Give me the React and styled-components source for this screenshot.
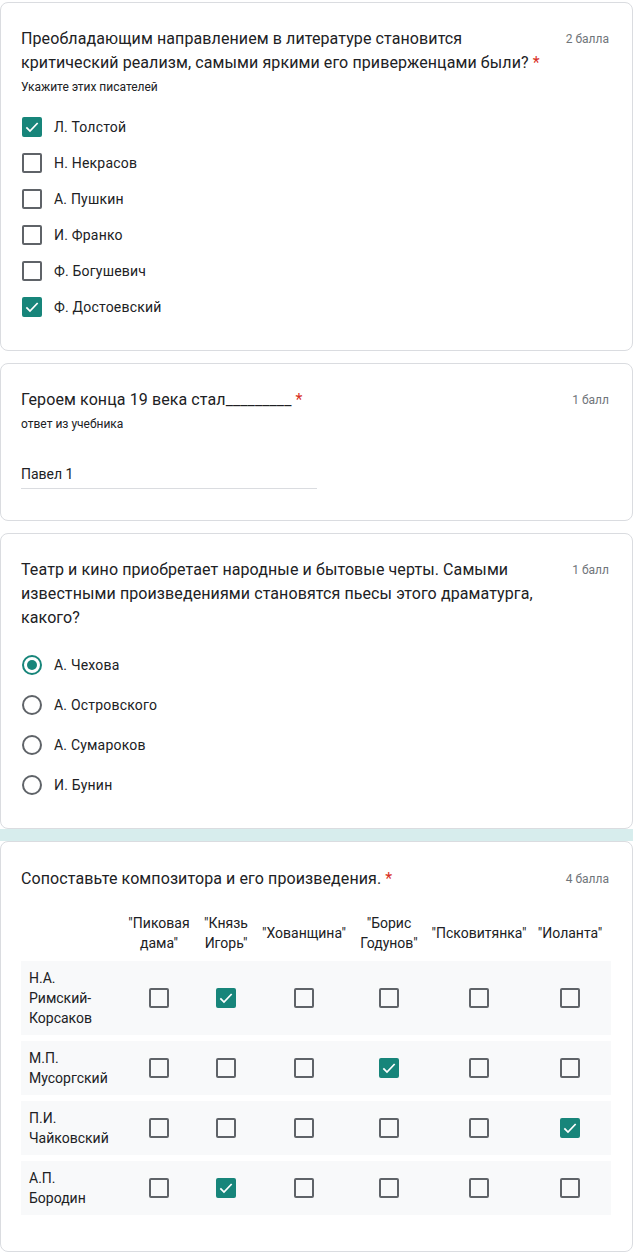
import React from 'react';
import styled, { createGlobalStyle } from 'styled-components';

const GlobalStyle = createGlobalStyle`
  body {
    margin: 0;
    background: #ffffff;
    font-family: Roboto, "Noto Sans", Arial, sans-serif;
    color: #202124;
  }
`;

const TEAL = '#17857a';

const authors = [
  { name: 'Л. Толстой', checked: true },
  { name: 'Н. Некрасов' },
  { name: 'А. Пушкин' },
  { name: 'И. Франко' },
  { name: 'Ф. Богушевич' },
  { name: 'Ф. Достоевский', checked: true },
];

const playwrights = ['А. Чехова', 'А. Островского', 'А. Сумароков', 'И. Бунин'];

const works = ['"Пиковая дама"', '"Князь Игорь"', '"Хованщина"', '"Борис Годунов"', '"Псковитянка"', '"Иоланта"'];

const composers = [
  { name: 'Н.А. Римский-Корсаков', pick: 1 },
  { name: 'М.П. Мусоргский', pick: 3 },
  { name: 'П.И. Чайковский', pick: 5 },
  { name: 'А.П. Бородин', pick: 1 },
];

const Check = ({ checked }) => (
  <Box $checked={checked}>
    {checked && (
      <svg width="16" height="16" viewBox="0 0 24 24">
        <path d="M3.5 12.5l5.5 5.5L20.5 6" fill="none" stroke="#fff" strokeWidth="2.6" />
      </svg>
    )}
  </Box>
);

const App = () => (
  <>
    <GlobalStyle />
    <Page>
      <Card $pad="24px 23px 25px 20px">
        <Head>
          <Title>
            Преобладающим направлением в литературе становится критический реализм, самыми яркими его
            приверженцами были? <Star>*</Star>
          </Title>
          <Points>2 балла</Points>
        </Head>
        <Hint>Укажите этих писателей</Hint>
        <Options $top="12px">
          {authors.map((a) => (
            <Option key={a.name} $h="36px">
              <Check checked={a.checked} />
              {a.name}
            </Option>
          ))}
        </Options>
      </Card>

      <Gap />

      <Card $pad="24px 23px 31px 20px">
        <Head>
          <Title>
            Героем конца 19 века стал_________ <Star>*</Star>
          </Title>
          <Points>1 балл</Points>
        </Head>
        <Hint>ответ из учебника</Hint>
        <Answer>Павел 1</Answer>
      </Card>

      <Gap />

      <Card $pad="24px 23px 23px 20px">
        <Head>
          <Title>
            Театр и кино приобретает народные и бытовые черты. Самыми известными произведениями становятся
            пьесы этого драматурга, какого?
          </Title>
          <Points>1 балл</Points>
        </Head>
        <Options $top="15px">
          {playwrights.map((p, i) => (
            <Option key={p} $h="40px">
              <Radio $on={i === 0} />
              {p}
            </Option>
          ))}
        </Options>
      </Card>

      <Gap $tint />

      <Card $pad="25px 23px 36px 20px">
        <Head>
          <Title>
            Сопоставьте композитора и его произведения. <Star>*</Star>
          </Title>
          <Points>4 балла</Points>
        </Head>
        <Grid>
          <HeaderRow>
            <span />
            {works.map((w) => (
              <ColHead key={w}>{w}</ColHead>
            ))}
          </HeaderRow>
          {composers.map((c) => (
            <GridRow key={c.name}>
              <RowLabel>{c.name}</RowLabel>
              {works.map((w, i) => (
                <Cell key={w}>
                  <Check checked={c.pick === i} />
                </Cell>
              ))}
            </GridRow>
          ))}
        </Grid>
      </Card>
    </Page>
  </>
);

const Page = styled.div`
  width: 635px;
  padding-top: 2px;
`;

const Card = styled.section`
  width: 633px;
  box-sizing: border-box;
  padding: ${(p) => p.$pad};
  border: 1px solid #dadce0;
  border-radius: 8px;
  background: #ffffff;
`;

const Gap = styled.div`
  height: 12px;
  margin-right: 2px;
  background: ${(p) => (p.$tint ? '#d7eded' : '#ffffff')};
`;

const Head = styled.div`
  display: flex;
  justify-content: space-between;
  align-items: flex-start;
  gap: 24px;
`;

const Title = styled.div`
  font-size: 16px;
  line-height: 24px;
  letter-spacing: 0.1px;
  color: #202124;
  max-width: 520px;
`;

const Star = styled.span`
  color: #d93025;
`;

const Points = styled.div`
  flex: none;
  font-size: 12px;
  line-height: 20px;
  margin-top: 2px;
  color: #70757a;
`;

const Hint = styled.div`
  margin-top: 2px;
  font-size: 12px;
  line-height: 20px;
  color: #202124;
`;

const Options = styled.div`
  display: flex;
  flex-direction: column;
  margin-top: ${(p) => p.$top};
`;

const Option = styled.div`
  display: flex;
  align-items: center;
  gap: 12px;
  height: ${(p) => p.$h};
  padding-left: 1px;
  font-size: 14px;
  letter-spacing: 0.2px;
  color: #202124;
`;

const Box = styled.span`
  flex: none;
  display: inline-flex;
  align-items: center;
  justify-content: center;
  width: 20px;
  height: 20px;
  box-sizing: border-box;
  border-radius: 2px;
  border: 2px solid ${(p) => (p.$checked ? TEAL : '#5f6368')};
  background: ${(p) => (p.$checked ? TEAL : 'transparent')};
`;

const Radio = styled.span`
  flex: none;
  width: 20px;
  height: 20px;
  box-sizing: border-box;
  border-radius: 50%;
  border: 2px solid ${(p) => (p.$on ? TEAL : '#5f6368')};
  display: flex;
  align-items: center;
  justify-content: center;
  &::after {
    content: '';
    width: 10px;
    height: 10px;
    border-radius: 50%;
    background: ${(p) => (p.$on ? TEAL : 'transparent')};
  }
`;

const Answer = styled.div`
  width: 296px;
  margin-top: 29px;
  padding-bottom: 3px;
  border-bottom: 1px solid #dadce0;
  font-size: 14px;
  line-height: 22px;
  color: #202124;
`;

const columns = '104px 68px 66px 90px 80px 100px 82px';

const Grid = styled.div`
  display: flex;
  flex-direction: column;
  gap: 6px;
  margin-top: 22px;
  width: 590px;
`;

const HeaderRow = styled.div`
  display: grid;
  grid-template-columns: ${columns};
  align-items: center;
  margin-bottom: 2px;
`;

const ColHead = styled.div`
  text-align: center;
  font-size: 14px;
  line-height: 20px;
  color: #202124;
`;

const GridRow = styled.div`
  display: grid;
  grid-template-columns: ${columns};
  align-items: center;
  padding: 7px 0;
  background: #f8f9fa;
`;

const RowLabel = styled.div`
  padding: 0 12px 0 8px;
  font-size: 14px;
  line-height: 20px;
  color: #202124;
`;

const Cell = styled.div`
  display: flex;
  justify-content: center;
`;

export default App;
